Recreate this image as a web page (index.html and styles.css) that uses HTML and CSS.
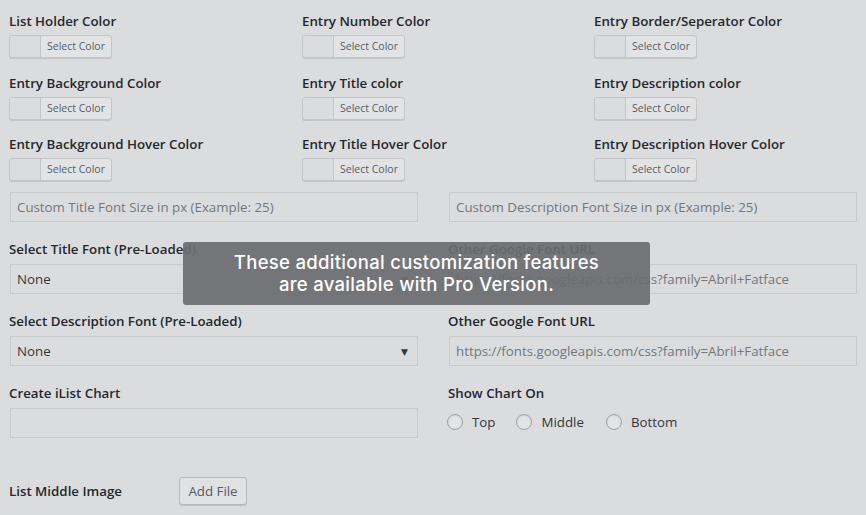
FILE: index.html
```html
<!DOCTYPE html>
<html>
<head>
<meta charset="utf-8">
<link rel="stylesheet" href="styles.css">
</head>
<body>
<div class="page">
  <div class="colors">
    <div class="field"><div class="label">List Holder Color</div><div class="picker"><span class="swatch"></span><span class="pick-text">Select Color</span></div></div>
    <div class="field"><div class="label">Entry Number Color</div><div class="picker"><span class="swatch"></span><span class="pick-text">Select Color</span></div></div>
    <div class="field"><div class="label">Entry Border/Seperator Color</div><div class="picker"><span class="swatch"></span><span class="pick-text">Select Color</span></div></div>
    <div class="field"><div class="label">Entry Background Color</div><div class="picker"><span class="swatch"></span><span class="pick-text">Select Color</span></div></div>
    <div class="field"><div class="label">Entry Title color</div><div class="picker"><span class="swatch"></span><span class="pick-text">Select Color</span></div></div>
    <div class="field"><div class="label">Entry Description color</div><div class="picker"><span class="swatch"></span><span class="pick-text">Select Color</span></div></div>
    <div class="field"><div class="label">Entry Background Hover Color</div><div class="picker"><span class="swatch"></span><span class="pick-text">Select Color</span></div></div>
    <div class="field"><div class="label">Entry Title Hover Color</div><div class="picker"><span class="swatch"></span><span class="pick-text">Select Color</span></div></div>
    <div class="field"><div class="label">Entry Description Hover Color</div><div class="picker"><span class="swatch"></span><span class="pick-text">Select Color</span></div></div>
  </div>

  <div class="pair sizes">
    <div class="box placeholder">Custom Title Font Size in px (Example: 25)</div>
    <div class="box placeholder">Custom Description Font Size in px (Example: 25)</div>
  </div>

  <div class="pair">
    <div class="field2"><div class="label">Select Title Font (Pre-Loaded)</div><div class="box select"><span>None</span><span class="arrow">▼</span></div></div>
    <div class="field2"><div class="label">Other Google Font URL</div><div class="box placeholder">https://fonts.googleapis.com/css?family=Abril+Fatface</div></div>
  </div>

  <div class="pair">
    <div class="field2"><div class="label">Select Description Font (Pre-Loaded)</div><div class="box select"><span>None</span><span class="arrow">▼</span></div></div>
    <div class="field2"><div class="label">Other Google Font URL</div><div class="box placeholder">https://fonts.googleapis.com/css?family=Abril+Fatface</div></div>
  </div>

  <div class="pair">
    <div class="field2"><div class="label">Create iList Chart</div><div class="box"></div></div>
    <div class="field2"><div class="label">Show Chart On</div>
      <div class="radios">
        <span class="radio"><span class="circle"></span>Top</span>
        <span class="radio"><span class="circle"></span>Middle</span>
        <span class="radio"><span class="circle"></span>Bottom</span>
      </div>
    </div>
  </div>

  <div class="image-row">
    <div class="label">List Middle Image</div>
    <div class="add-btn">Add File</div>
  </div>

  <div class="overlay">These additional customization features<br>are available with Pro Version.</div>
</div>
</body>
</html>
```

FILE: styles.css
```css
html, body {
  margin: 0;
  padding: 0;
  background: #dbdcde;
  font-family: "Open Sans", "Noto Sans", "DejaVu Sans", sans-serif;
  color: #23282d;
  overflow: hidden;
}
.page {
  position: relative;
  padding: 11px 0 0 9px;
  width: 857px;
  height: 504px;
}
.label {
  font-size: 13.3px;
  font-weight: 600;
  line-height: 20px;
  color: #23282d;
  white-space: nowrap;
}
.colors {
  display: grid;
  grid-template-columns: 293px 292px 1fr;
  row-gap: 14.5px;
}
.field .label { margin-bottom: 4px; }
.picker {
  display: flex;
  width: 101px;
  height: 21px;
  border: 1px solid #c4c5c7;
  border-radius: 3px;
  box-shadow: 0 1px 0 #c4c5c7;
  background: #e2e3e5;
  box-sizing: content-box;
}
.swatch {
  width: 30px;
  border-right: 1px solid #c4c5c7;
  background: #dbdcde;
  border-radius: 3px 0 0 3px;
}
.pick-text {
  flex: 1;
  text-align: center;
  font-size: 10.5px;
  line-height: 21px;
  color: #555d66;
}
.pair {
  display: grid;
  grid-template-columns: 408px 408px;
  column-gap: 31px;
  margin-left: 1px;
  margin-top: 17px;
}
.pair .label { margin-left: -1px; }
.sizes { margin-top: 11px; }
.field2 .label { margin-bottom: 5px; }
.box {
  height: 28px;
  border: 1px solid #c8c9cb;
  background: #dbdcde;
  box-sizing: content-box;
  display: flex;
  align-items: center;
  padding: 0 6px;
  font-size: 13.3px;
  white-space: nowrap;
  overflow: hidden;
}
.box.placeholder { color: #72777c; }
.select {
  justify-content: space-between;
  color: #32373c;
}
.arrow {
  font-size: 9px;
  color: #32373c;
  margin-right: 3px;
}
.radios {
  display: flex;
  align-items: center;
  height: 28px;
  margin-left: -2px;
  font-size: 13.3px;
  color: #32373c;
}
.radio {
  display: flex;
  align-items: center;
  margin-right: 21px;
}
.radio:nth-child(2) { margin-right: 22px; }
.circle {
  width: 14px;
  height: 14px;
  border: 1px solid #9ea0a3;
  border-radius: 50%;
  background: #e3e4e6;
  margin-right: 9px;
  box-shadow: inset 0 1px 2px rgba(0,0,0,0.08);
}
.image-row {
  display: flex;
  align-items: center;
  margin-top: 39px;
}
.image-row .label { width: 170px; }
.add-btn {
  height: 26px;
  width: 66px;
  border: 1px solid #b8b9bb;
  border-radius: 3px;
  box-shadow: 0 1px 0 #c0c1c3;
  background: #e0e1e3;
  font-size: 13.3px;
  color: #555d66;
  display: flex;
  align-items: center;
  justify-content: center;
}
.overlay {
  position: absolute;
  left: 183px;
  top: 242px;
  width: 467px;
  height: 63px;
  background: rgba(107, 109, 112, 0.93);
  border-radius: 3px;
  color: #fff;
  font-family: "Inter", "Lato", sans-serif;
  font-weight: 500;
  font-size: 18.5px;
  letter-spacing: 0.3px;
  line-height: 22px;
  text-align: center;
  padding-top: 9px;
  box-sizing: border-box;
}
```
